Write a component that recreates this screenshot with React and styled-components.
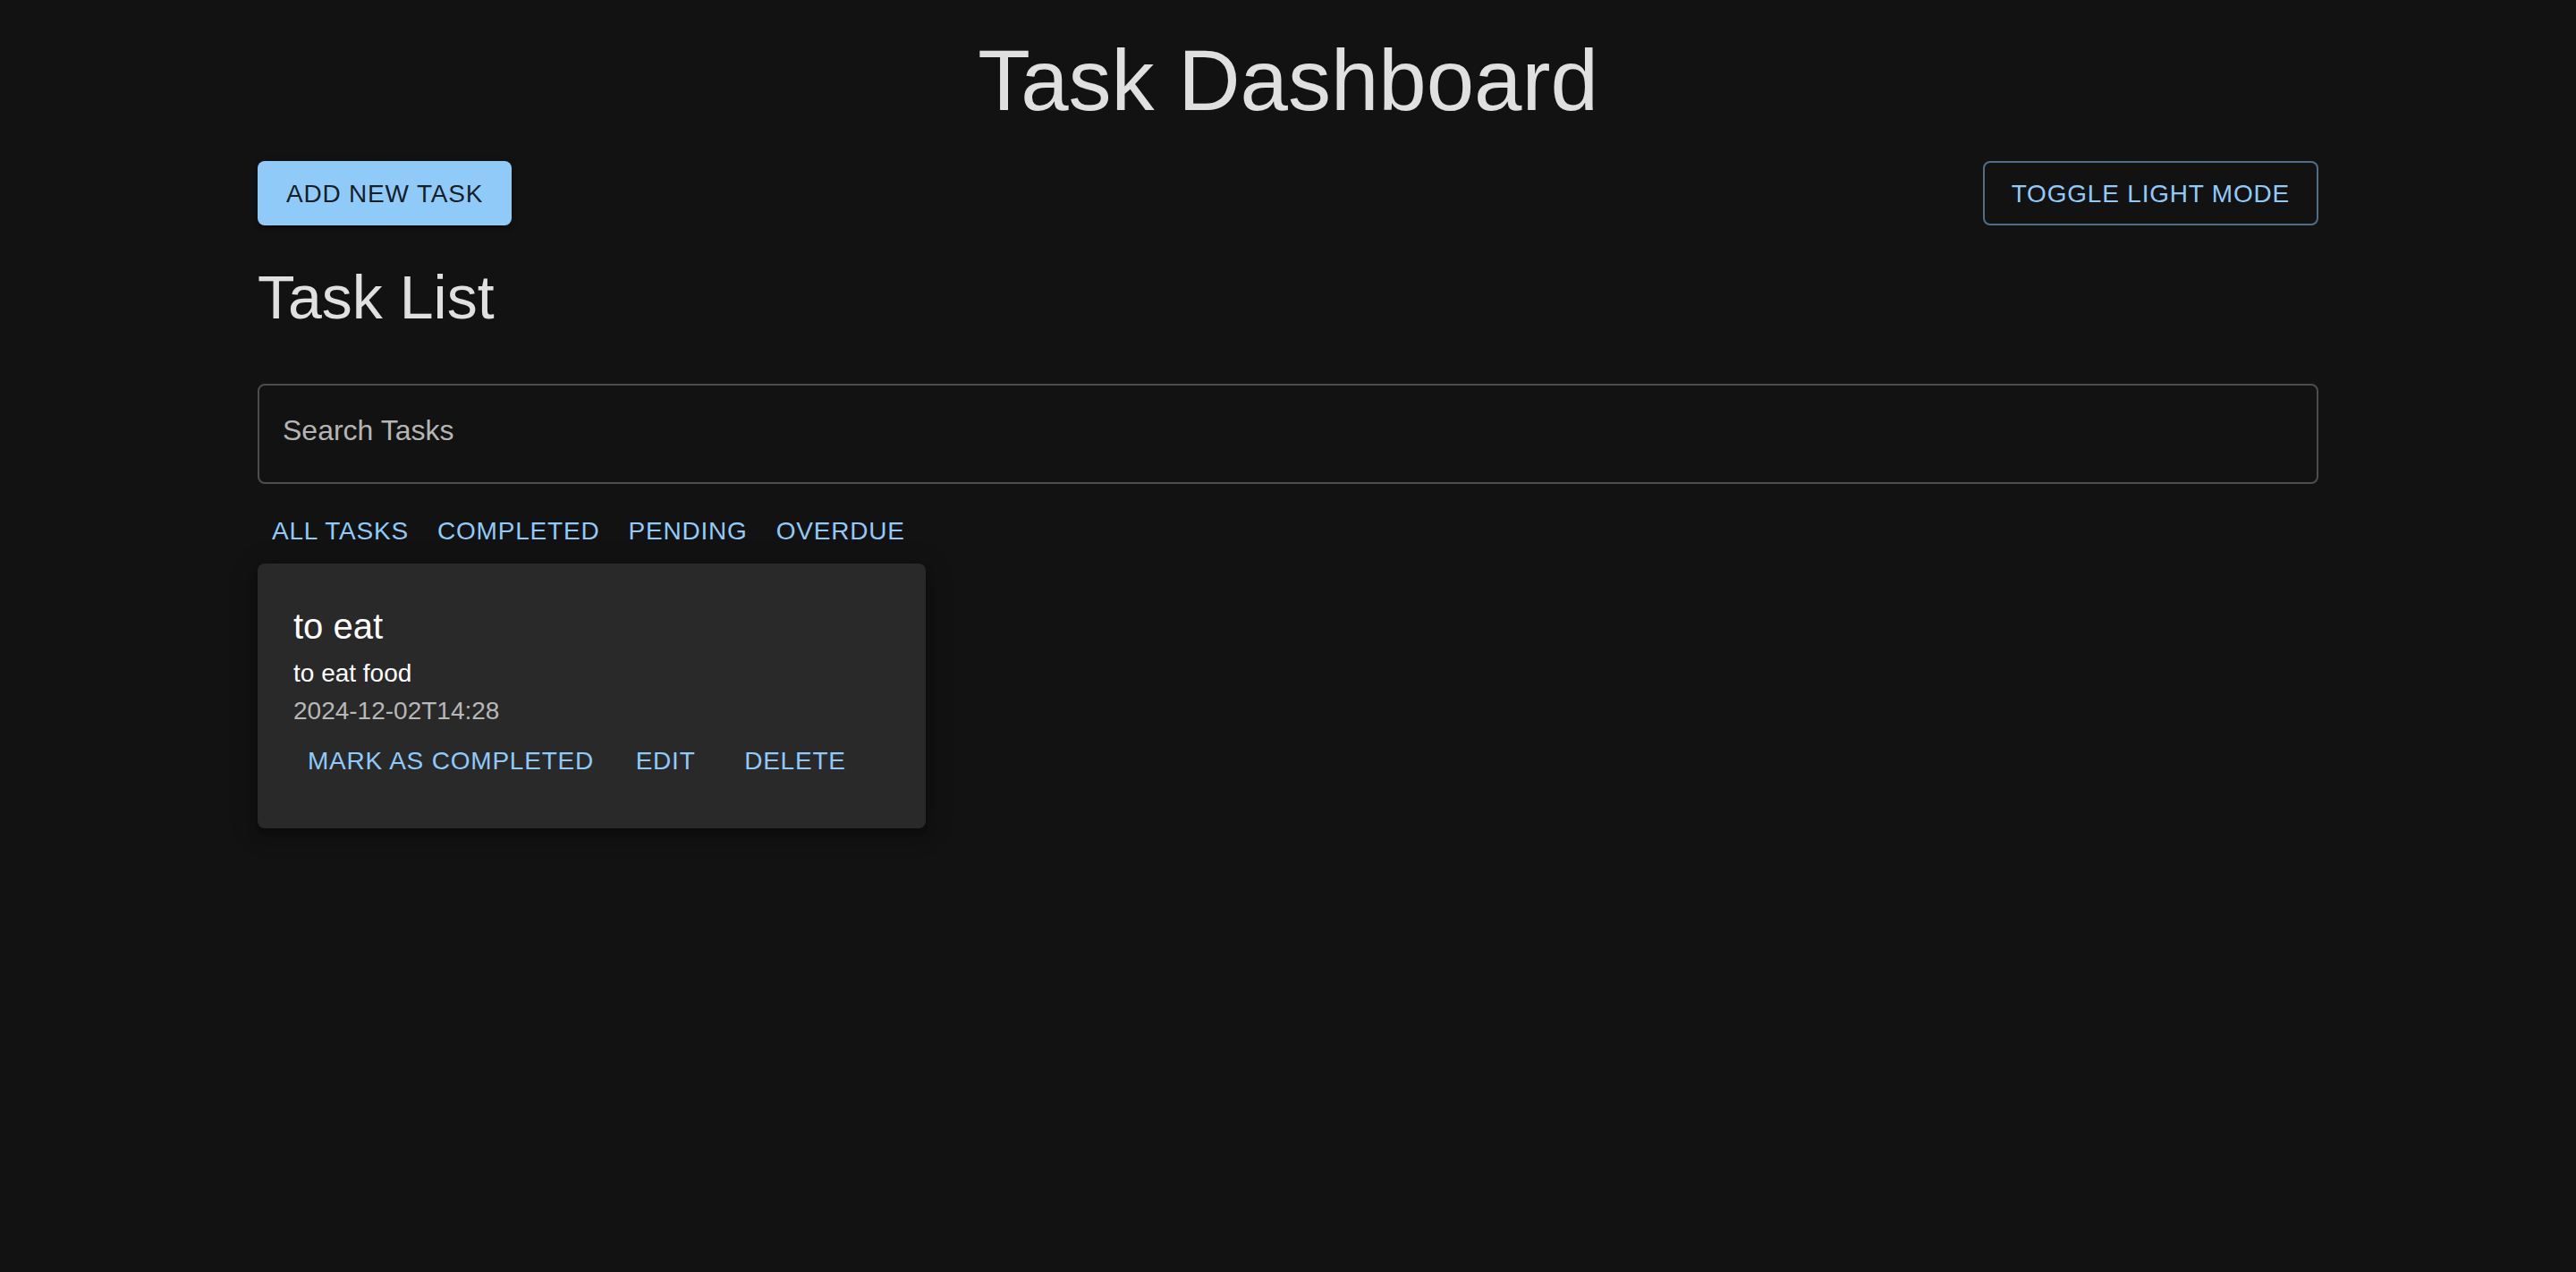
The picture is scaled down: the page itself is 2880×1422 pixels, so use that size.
import React, { useState } from "react";
import styled, { createGlobalStyle } from "styled-components";

const GlobalStyle = createGlobalStyle`
  html, body {
    margin: 0;
    padding: 0;
    background: #121212;
  }
  body {
    font-family: "Liberation Sans", Arial, Helvetica, sans-serif;
    color: #fff;
  }
  * { box-sizing: border-box; }
`;

const Page = styled.div`
  min-height: 1422px;
  background: #121212;
`;

const Container = styled.div`
  width: 2304px;
  margin: 0 auto;
  padding-top: 34px;
`;

const Title = styled.h1`
  margin: 0 0 34px;
  font-size: 96px;
  line-height: 112px;
  font-weight: 400;
  color: #e0e0e0;
  text-align: center;
`;

const Toolbar = styled.div`
  display: flex;
  justify-content: space-between;
  align-items: center;
  height: 72px;
`;

const paddings = {
  contained: "0 32px",
  outlined: "0 30px",
  text: "0 16px",
};

const Button = styled.button`
  display: inline-flex;
  align-items: center;
  justify-content: center;
  height: ${(p) => (p.$variant === "text" ? "73px" : "72px")};
  min-width: 128px;
  padding: ${(p) => paddings[p.$variant]};
  margin-left: ${(p) => p.$ml || 0}px;
  border-radius: 8px;
  font-family: inherit;
  font-size: 28px;
  font-weight: 500;
  letter-spacing: 0.8px;
  text-transform: uppercase;
  line-height: 49px;
  cursor: pointer;
  white-space: nowrap;
  background: ${(p) => (p.$variant === "contained" ? "#90caf9" : "transparent")};
  color: ${(p) => (p.$variant === "contained" ? "rgba(0,0,0,0.87)" : "#90caf9")};
  border: ${(p) =>
    p.$variant === "outlined" ? "2px solid rgba(144,202,249,0.5)" : "none"};
  box-shadow: ${(p) =>
    p.$variant === "contained"
      ? "0 6px 2px -4px rgba(0,0,0,0.2), 0 4px 4px 0 rgba(0,0,0,0.14), 0 2px 10px 0 rgba(0,0,0,0.12)"
      : "none"};
`;

const SectionTitle = styled.h2`
  margin: 38px 0 0;
  font-size: 68px;
  line-height: 84px;
  font-weight: 400;
  color: #e0e0e0;
`;

const SearchInput = styled.input`
  display: block;
  width: 100%;
  height: 112px;
  margin: 55px 0 16px;
  padding: 0 28px 7px 26px;
  background: transparent;
  border: 2px solid #4d4d4d;
  border-radius: 8px;
  font-family: inherit;
  font-size: 32px;
  color: #fff;
  outline: none;

  &::placeholder {
    color: #b5b5b5;
    opacity: 1;
  }
`;

const Filters = styled.div`
  display: flex;
  align-items: center;
`;

const Grid = styled.div`
  display: grid;
  grid-template-columns: repeat(3, minmax(0, 1fr));
  gap: 32px;
`;

const Card = styled.div`
  background: #292929;
  border-radius: 8px;
  padding: 40px 40px 39px;
  box-shadow: 0 6px 6px -4px rgba(0, 0, 0, 0.2), 0 8px 12px 2px rgba(0, 0, 0, 0.14),
    0 4px 28px 6px rgba(0, 0, 0, 0.14);
`;

const CardTitle = styled.div`
  font-size: 40px;
  line-height: 60px;
  color: #fff;
`;

const CardText = styled.div`
  font-size: 28px;
  line-height: 46px;
  color: #fff;
`;

const CardDate = styled.div`
  font-size: 28px;
  line-height: 38px;
  color: #b8b8b8;
`;

const Actions = styled.div`
  display: flex;
  align-items: center;
`;

const tasks = [
  {
    id: 1,
    title: "to eat",
    description: "to eat food",
    due: "2024-12-02T14:28",
  },
];

const filters = ["All Tasks", "Completed", "Pending", "Overdue"];

const App = () => {
  const [search, setSearch] = useState("");

  return (
    <Page>
      <GlobalStyle />
      <Container>
        <Title>Task Dashboard</Title>
        <Toolbar>
          <Button $variant="contained">Add New Task</Button>
          <Button $variant="outlined">Toggle Light Mode</Button>
        </Toolbar>
        <SectionTitle>Task List</SectionTitle>
        <SearchInput
          placeholder="Search Tasks"
          value={search}
          onChange={(e) => setSearch(e.target.value)}
        />
        <Filters>
          {filters.map((f) => (
            <Button key={f} $variant="text">
              {f}
            </Button>
          ))}
        </Filters>
        <Grid>
          {tasks
            .filter((t) => t.title.toLowerCase().includes(search.toLowerCase()))
            .map((t) => (
              <Card key={t.id}>
                <CardTitle>{t.title}</CardTitle>
                <CardText>{t.description}</CardText>
                <CardDate>{t.due}</CardDate>
                <Actions>
                  <Button $variant="text">Mark as Completed</Button>
                  <Button $variant="text">Edit</Button>
                  <Button $variant="text" $ml={8}>
                    Delete
                  </Button>
                </Actions>
              </Card>
            ))}
        </Grid>
      </Container>
    </Page>
  );
};

export default App;
